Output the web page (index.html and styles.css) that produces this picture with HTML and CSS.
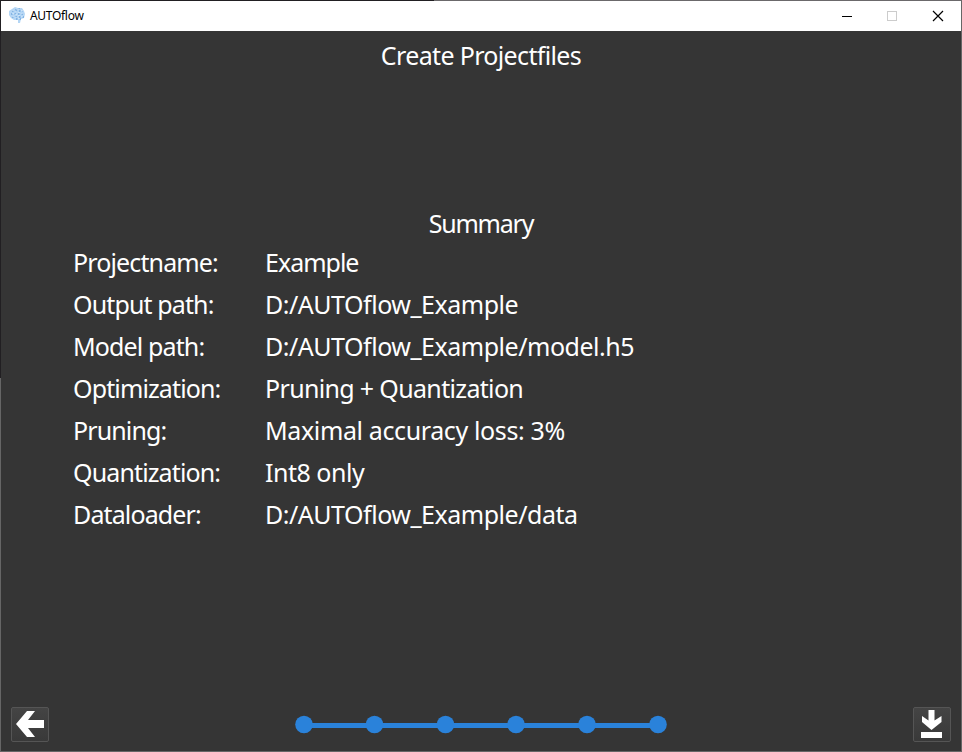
FILE: index.html
```html
<!DOCTYPE html>
<html lang="en">
<head>
<meta charset="utf-8">
<title>AUTOflow</title>
<link rel="stylesheet" href="styles.css">
</head>
<body>
<div class="window">
  <header class="titlebar">
    <svg class="logo" width="17" height="17" viewBox="0 0 17 17">
      <path fill="#b4d6f5" d="M3 2 6 0l3 1 4 0 2 3 1 3-1 4-3 1-1 4-2 0 0-3-4 0-3-2-2-3 0-4z"/>
      <path stroke="#76aade" stroke-width="1.3" stroke-dasharray="1.5 2" fill="none" d="M3 4h11M2 7h13M3 10h12M6 2h7M7 12h6"/>
      <path stroke="#e4f2fc" stroke-dasharray="1 2" fill="none" d="M4 3v8M7 1v11M10 2v10M13 3v8"/>
    </svg>
    <span class="app-name">AUTOflow</span>
    <svg class="controls" width="138" height="29" viewBox="0 0 138 29" fill="none" shape-rendering="crispEdges">
      <path stroke="#000" d="M19 14.500h10"/>
      <path stroke="#ccc" d="M64.500 9.500h9v9h-9z"/>
      <path stroke="#000" stroke-width="1.200" shape-rendering="auto" d="m110 9 10 10m0-10-10 10"/>
    </svg>
  </header>
  <main class="page">
    <h1 class="heading">Create Projectfiles</h1>
    <h2 class="subheading">Summary</h2>
    <dl class="summary">
      <dt>Projectname:</dt><dd class="name">Example</dd>
      <dt>Output path:</dt><dd>D:/AUTOflow_Example</dd>
      <dt>Model path:</dt><dd>D:/AUTOflow_Example/model.h5</dd>
      <dt>Optimization:</dt><dd class="optimization">Pruning + Quantization</dd>
      <dt>Pruning:</dt><dd class="pruning">Maximal accuracy loss: 3%</dd>
      <dt>Quantization:</dt><dd>Int8 only</dd>
      <dt>Dataloader:</dt><dd>D:/AUTOflow_Example/data</dd>
    </dl>
    <footer class="footer">
      <button class="tool" aria-label="Back"><svg width="36" height="33" viewBox="0 0 36 33"><path fill="#fff" d="M4 16 15 3h8l-7 9h16v8H16l7 9h-8z"/></svg></button>
      <svg class="steps" width="374" height="20" viewBox="0 0 374 20" fill="#2a82da">
        <path d="M10 8h354v5H10z"/>
        <circle cx="10" cy="9.500" r="8.800"/><circle cx="80.500" cy="9.500" r="8.800"/><circle cx="151.500" cy="9.500" r="8.800"/><circle cx="222" cy="9.500" r="8.800"/><circle cx="293" cy="9.500" r="8.800"/><circle cx="364" cy="9.500" r="8.800"/>
      </svg>
      <button class="tool" aria-label="Download"><svg width="36" height="33" viewBox="0 0 36 33"><path fill="#fff" d="M14.500 2h6v10.500l7-4.500v6l-10 8-9.500-8V8l6.500 4.500zM7 24h21v6H7z"/></svg></button>
    </footer>
  </main>
</div>
</body>
</html>
```
FILE: styles.css
```css
* { box-sizing: border-box; }
body { margin: 0; background: #666; }
.window {
  width: 962px;
  height: 752px;
  padding: 1px;
  background: linear-gradient(#211f22 378px, #666 378px) left / 1px 100% no-repeat, linear-gradient(90deg, #211f22 434px, #6b696b 434px) top / 100% 1px no-repeat, #666;
  display: flex;
  flex-direction: column;
  font-family: "Noto Sans", sans-serif;
}
.titlebar {
  height: 30px;
  background: #fff;
  display: flex;
  align-items: center;
  padding-left: 8px;
}
.logo { margin-bottom: 2px; }
.app-name { margin-left: 4px; font-size: 12px; line-height: 28px; color: #000; letter-spacing: -0.3px; }
.controls { margin-left: auto; }
.page {
  flex: 1;
  background: #353535;
  color: #fff;
  display: flex;
  flex-direction: column;
  font-size: 25px;
}
.heading, .subheading { margin: 0; font-size: 25px; font-weight: 400; text-align: center; line-height: 42px; }
.heading { margin-top: 3px; letter-spacing: -0.65px; }
.subheading { margin-top: 126px; letter-spacing: -1.2px; }
.summary {
  margin: -3px 0 0 72px;
  display: grid;
  grid-template-columns: 192px 1fr;
  grid-auto-rows: 42px;
  line-height: 42px;
  white-space: nowrap;
}
.summary dt { letter-spacing: -0.87px; }
.summary dd { margin: 0; letter-spacing: -0.48px; }
.summary .name { letter-spacing: -1px; }
.summary .optimization { letter-spacing: -0.66px; }
.summary .pruning { letter-spacing: -0.37px; }
.footer {
  margin-top: auto;
  padding: 0 10px 9px;
  display: flex;
  justify-content: space-between;
  align-items: center;
}
.tool {
  width: 38px;
  height: 35px;
  padding: 0;
  border: 1px solid #555;
  border-radius: 2px;
  background: linear-gradient(#444, #393939);
}
.tool svg { display: block; }
.steps { display: block; }
```
